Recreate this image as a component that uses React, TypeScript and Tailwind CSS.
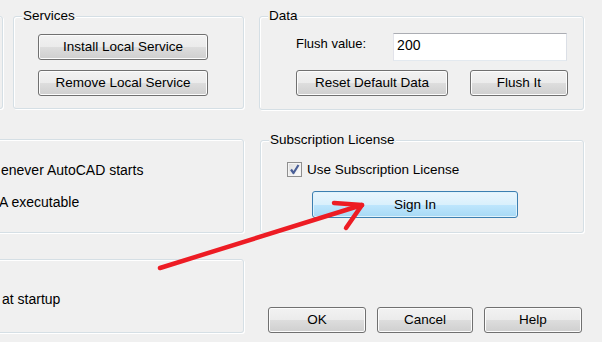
import React from "react";

const btn =
  "flex items-center justify-center h-[26px] pt-[1px] rounded-[3px] border border-[#707070] bg-[linear-gradient(to_bottom,#f2f2f2_0%,#ebebeb_50%,#dddddd_51%,#cfcfcf_100%)] shadow-[inset_0_0_0_1px_#fcfcfc] text-[13.5px] text-black";

const group =
  "relative rounded-[3px] border border-[#d5dfe5] shadow-[inset_1px_1px_0_#ffffff,1px_1px_0_#ffffff]";

function Label({ children }: { children: React.ReactNode }) {
  return (
    <span className="absolute left-[8px] top-[-9px] bg-[#f0f0f0] px-[1px] leading-[15px] text-[13.5px] text-black">
      {children}
    </span>
  );
}

export default function App() {
  return (
    <div
      className="relative w-[602px] h-[342px] overflow-hidden bg-[#f0f0f0] text-[13px] text-black"
      style={{ fontFamily: '"Liberation Sans", Arial, sans-serif' }}
    >
      <div className="flex flex-col pt-[16px]">
        {/* Row 1 */}
        <div className="flex">
          <div className={`${group} ml-[-100px] w-[103px] h-[93px] shrink-0`} />
          <div className={`${group} ml-[10px] w-[231px] h-[93px] shrink-0`}>
            <Label>Services</Label>
            <div className="flex flex-col gap-[10px] pt-[17px] pl-[24px]">
              <div className={`${btn} w-[170px]`}>Install Local Service</div>
              <div className={`${btn} w-[170px]`}>Remove Local Service</div>
            </div>
          </div>
          <div className={`${group} ml-[15px] w-[325px] h-[94px] shrink-0`}>
            <Label>Data</Label>
            <div className="flex items-start pt-[16px] pl-[36px]">
              <span className="mt-[3px] leading-[15px]">Flush value:</span>
              <div className="ml-[27px] w-[174px] h-[28px] border border-[#abadb3] border-l-[#e2e3ea] border-r-[#dbdfe6] border-b-[#e3e9ef] bg-white pl-[3px] pt-[4px] leading-[15px] text-[14px]">
                200
              </div>
            </div>
            <div className="flex pt-[9px] pl-[36px] gap-[22px]">
              <div className={`${btn} w-[152px]`}>Reset Default Data</div>
              <div className={`${btn} w-[98px]`}>Flush It</div>
            </div>
          </div>
        </div>

        {/* Row 2 */}
        <div className="flex mt-[29px]">
          <div className={`${group} ml-[-100px] w-[344px] h-[94px] shrink-0 pl-[100px]`}>
            <div className="flex flex-col pt-[23px]">
              <span className="leading-[15px] text-[14px]">enever AutoCAD starts</span>
              <span className="leading-[15px] text-[14px] mt-[17px] ml-[-2px]">A executable</span>
            </div>
          </div>
          <div className={`${group} ml-[16px] w-[324px] h-[93px] shrink-0 mt-[1px]`}>
            <Label>Subscription License</Label>
            <div className="flex items-center pt-[21px] pl-[26px]">
              <div className="relative w-[15px] h-[15px] border border-[#8f8f8f] bg-[linear-gradient(135deg,#dcdcdc,#ffffff)] shadow-[inset_0_0_0_1px_#f4f4f4]">
                <svg viewBox="0 0 13 13" className="absolute left-0 top-0 w-[13px] h-[13px]">
                  <path d="M3 6.5 L5.5 10 L10.5 2" fill="none" stroke="#4a5f97" strokeWidth="2.2" strokeLinejoin="round" />
                </svg>
              </div>
              <span className="ml-[5px] leading-[15px] text-[13.5px]">Use Subscription License</span>
            </div>
            <div className="pt-[14px] pl-[51px]">
              <div className="flex items-center justify-center w-[206px] h-[27px] pt-[1px] rounded-[3px] border border-[#3c7fb1] bg-[linear-gradient(to_bottom,#eaf6fd_0%,#d9f0fc_50%,#bee6fd_51%,#a7d9f5_100%)] shadow-[inset_0_0_0_1px_#dff3fc] text-[13.5px]">
                Sign In
              </div>
            </div>
          </div>
        </div>

        {/* Row 3 */}
        <div className="flex mt-[26px]">
          <div className={`${group} ml-[-100px] w-[344px] h-[74px] shrink-0 pl-[101px]`}>
            <div className="pt-[32px] leading-[15px] text-[14px]">at startup</div>
          </div>
          <div className="flex gap-[11px] ml-[24px] mt-[48px]">
            <div className={`${btn} w-[98px]`}>OK</div>
            <div className={`${btn} w-[96px]`}>Cancel</div>
            <div className={`${btn} w-[98px]`}>Help</div>
          </div>
        </div>
      </div>

      <svg className="absolute left-0 top-0 pointer-events-none" width="602" height="342">
        <g fill="none" stroke="#ed1c24" strokeWidth="4.5" strokeLinecap="round" strokeLinejoin="round">
          <path d="M160 268 L362 205" />
          <path d="M334 203 L362 205 L346 228" />
        </g>
      </svg>
    </div>
  );
}
